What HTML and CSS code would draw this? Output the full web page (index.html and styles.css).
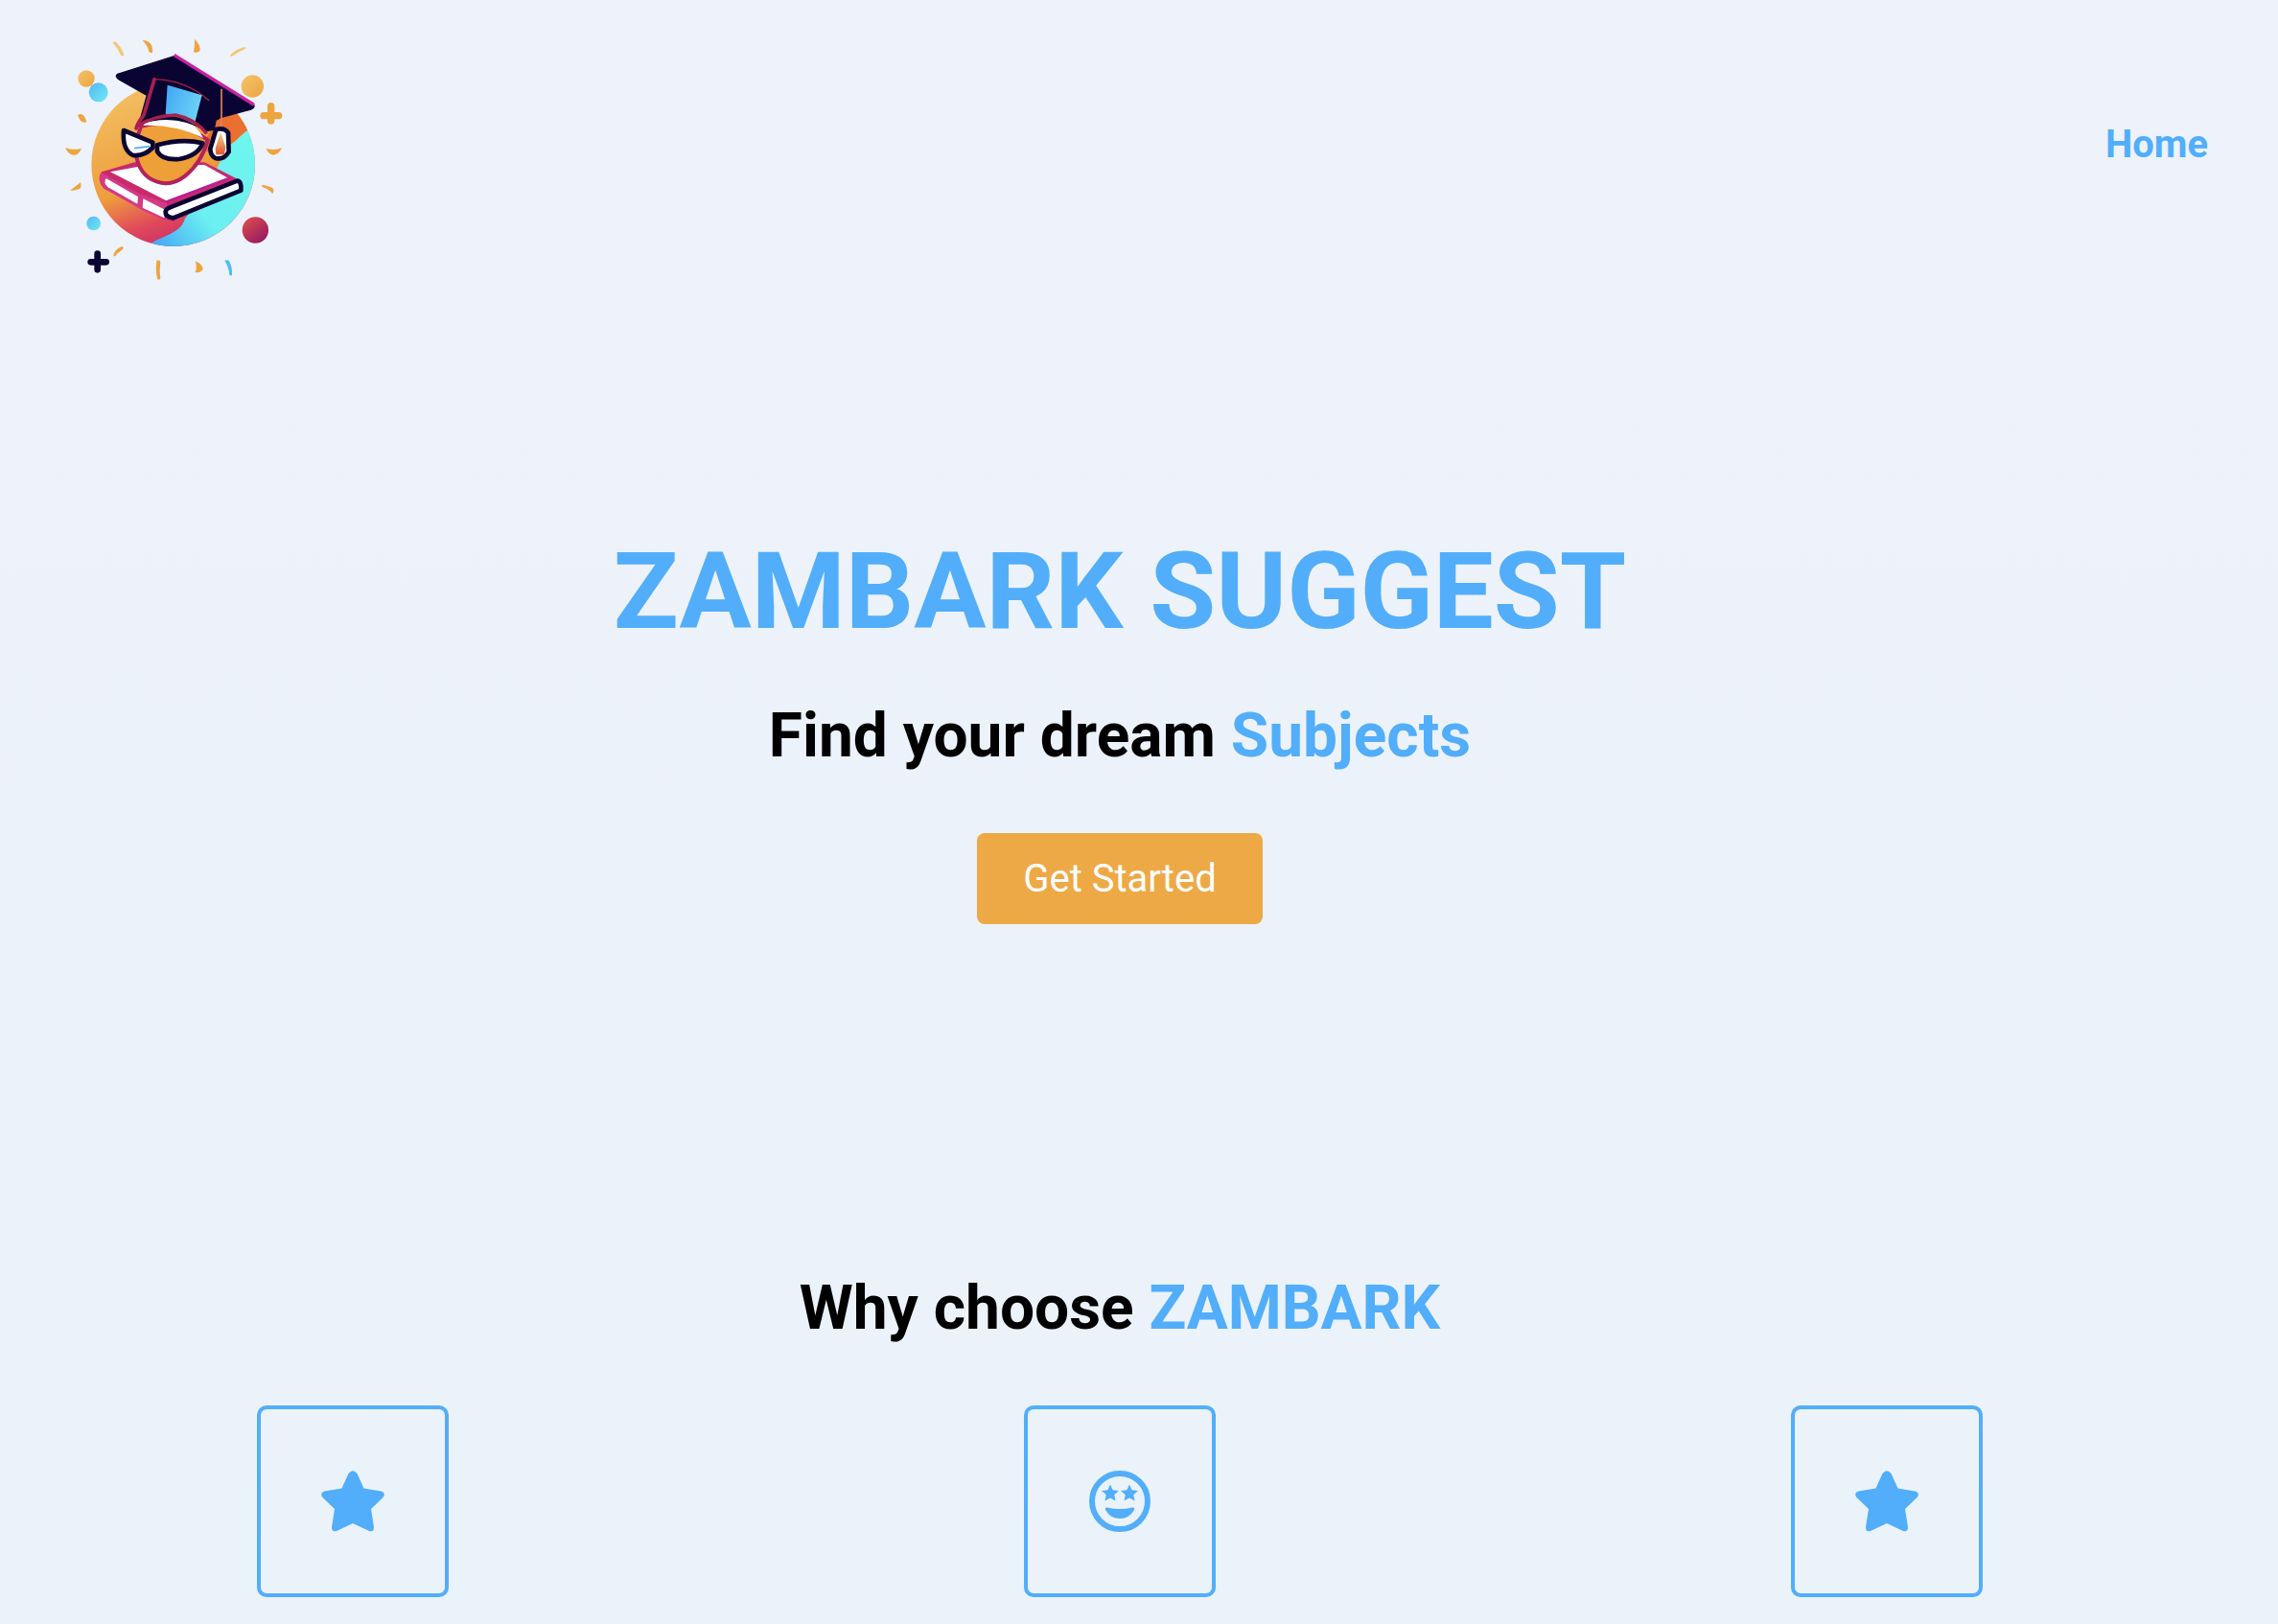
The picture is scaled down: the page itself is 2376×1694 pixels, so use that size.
FILE: index.html
```html
<!DOCTYPE html>
<html lang="en">
<head>
    <meta charset="UTF-8">
    <meta name="viewport" content="width=device-width, initial-scale=1.0">
    <title>Zambark Suggest</title>
    <link rel="stylesheet" href="styles.css">
</head>
<body>
    <header class="site-header">
        <a class="logo" href="#" aria-label="Zambark logo">
            <svg class="logo-img" viewBox="0 0 810 840" xmlns="http://www.w3.org/2000/svg">
                <defs>
                    <linearGradient id="discWarm" x1="0.2" y1="0" x2="0.55" y2="1">
                        <stop offset="0" stop-color="#f3c164"/>
                        <stop offset="0.6" stop-color="#ee9d3d"/>
                        <stop offset="0.82" stop-color="#e0495a"/>
                        <stop offset="1" stop-color="#c92a6c"/>
                    </linearGradient>
                    <linearGradient id="discCool" x1="1" y1="0.1" x2="0" y2="1">
                        <stop offset="0" stop-color="#6ff6ee"/>
                        <stop offset="0.6" stop-color="#6ceff0"/>
                        <stop offset="1" stop-color="#3f9ff8"/>
                    </linearGradient>
                    <linearGradient id="panel" x1="0" y1="0" x2="1" y2="0.4">
                        <stop offset="0" stop-color="#3fa5f5"/>
                        <stop offset="1" stop-color="#6cd2f5"/>
                    </linearGradient>
                    <linearGradient id="ball" x1="0.1" y1="0" x2="0.9" y2="1">
                        <stop offset="0" stop-color="#df4f4e"/>
                        <stop offset="1" stop-color="#8f1560"/>
                    </linearGradient>
                    <linearGradient id="sun" x1="0" y1="0" x2="1" y2="1">
                        <stop offset="0" stop-color="#f2c46a"/>
                        <stop offset="1" stop-color="#eea43f"/>
                    </linearGradient>
                    <linearGradient id="drop" x1="0" y1="0" x2="1" y2="1">
                        <stop offset="0" stop-color="#55b8f7"/>
                        <stop offset="1" stop-color="#6fe9f0"/>
                    </linearGradient>
                    <linearGradient id="tassel" x1="0" y1="0" x2="0" y2="1">
                        <stop offset="0" stop-color="#f5d9a0"/>
                        <stop offset="1" stop-color="#e0562c"/>
                    </linearGradient>
                    <clipPath id="discClip"><circle cx="392" cy="455" r="256"/></clipPath>
                </defs>

                <!-- disc -->
                <circle cx="392" cy="455" r="256" fill="url(#discWarm)"/>
                <g clip-path="url(#discClip)">
                    <path d="M560 250 L660 300 L628 345 C600 365 585 385 560 400 L470 420 Z" fill="#ea6f30"/>
                    <path d="M628 345 C600 365 590 385 565 395 L480 560 L428 625 C420 665 370 675 325 700 L330 730 L680 730 L680 340 Z" fill="url(#discCool)"/>
                </g>

                <!-- confetti -->
                <g fill="#eea43f">
                    <path d="M203 74 Q208 66 214 72 Q230 88 238 110 Q236 118 229 114 Q220 92 203 74 Z" fill="#f3c779"/>
                    <path d="M570 112 Q590 92 616 87 Q622 90 616 94 Q596 102 576 116 Q570 118 570 112 Z" fill="#f3c779"/>
                    <path d="M296 66 Q330 68 327 104 Q322 106 316 102 Q314 85 296 66 Z"/>
                    <path d="M459 62 Q480 84 475 100 Q462 108 456 102 Q460 85 459 62 Z"/>
                    <path d="M93 300 Q112 288 121 322 Q102 328 93 300 Z"/>
                    <path d="M55 402 Q80 412 105 404 Q95 428 78 425 Q62 422 55 402 Z"/>
                    <path d="M682 404 Q708 412 732 403 Q722 425 705 425 Q690 422 682 404 Z"/>
                    <path d="M69 536 Q85 525 102 511 Q106 525 100 530 Q85 538 69 536 Z"/>
                    <path d="M670 518 Q695 522 705 530 Q708 540 703 546 Q688 530 670 525 Z"/>
                    <path d="M205 740 Q208 720 232 711 Q240 715 232 722 Q218 730 212 740 Q208 743 205 740 Z"/>
                    <path d="M340 755 Q352 752 352 760 Q348 785 352 812 Q346 818 342 812 Q336 785 340 755 Z"/>
                    <path d="M461 757 Q488 768 484 785 Q472 796 461 792 Q468 775 461 757 Z"/>
                    <path d="M553 755 Q565 752 568 758 Q578 778 576 800 Q572 805 568 800 Q565 775 553 755 Z" fill="#4fc0ee"/>
                </g>

                <circle cx="120" cy="186" r="26" fill="url(#sun)"/>
                <circle cx="158" cy="229" r="30" fill="url(#drop)"/>
                <circle cx="640" cy="210" r="35" fill="url(#sun)"/>
                <circle cx="143" cy="639" r="22" fill="url(#drop)"/>
                <circle cx="649" cy="660" r="41" fill="url(#ball)"/>
                <path d="M698 272 V318 M675 302 H722" stroke="#eea43f" stroke-width="22" stroke-linecap="round" fill="none"/>
                <path d="M155 734 V784 M134 760 H182" stroke="#0a0432" stroke-width="20" stroke-linecap="round" fill="none"/>

                <!-- book -->
                <path d="M168 478 L270 448 L490 448 L596 502 L390 634 L290 585 L175 530 Q150 500 168 478 Z" fill="#c92a6c"/>
                <path d="M195 478 L280 462 L490 456 L565 498 L370 568 Z" fill="#fff"/>
                <path d="M370 572 L570 496" stroke="#b91f9a" stroke-width="7" fill="none"/>
                <path d="M168 480 L290 548 L372 576 L372 632 L300 600 L176 530 Q152 500 168 480 Z" fill="#d43a86"/>
                <path d="M182 498 L282 556 L280 578 L188 526 Q172 512 182 498 Z" fill="#fff"/>
                <path d="M298 562 L366 596 L364 622 L296 590 Z" fill="#fff"/>
                <path d="M380 590 L592 506 Q606 506 604 536 L392 622 Q366 618 368 602 Q370 594 380 590 Z" fill="#fff" stroke="#0a0432" stroke-width="14" stroke-linejoin="round"/>

                <!-- face -->
                <path d="M292 335 Q400 305 500 378 Q480 450 430 490 Q385 525 340 508 Q285 490 275 420 Q272 380 292 335 Z" fill="#ee9f38" stroke="#b3225c" stroke-width="12" stroke-linejoin="round"/>
                <path d="M295 326 Q370 300 440 322 Q470 340 486 372 Q405 330 300 332 Z" fill="#fff"/>

                <!-- cap -->
                <path d="M218 172 L395 116 L640 262 Q652 275 636 282 L540 308 L525 316 L520 345 L495 350 Q400 290 285 328 L310 238 L225 190 Q208 180 218 172 Z" fill="#0a0432" stroke="#0a0432" stroke-width="4" stroke-linejoin="round"/>
                <path d="M395 112 L645 268" stroke="#c722a5" stroke-width="10" fill="none"/>
                <path d="M335 188 Q430 190 505 255" stroke="#a8203f" stroke-width="4" fill="none"/>
                <path d="M333 188 L300 300 Q280 325 276 342" stroke="#a8204f" stroke-width="11" fill="none" stroke-linecap="round"/>
                <path d="M374 206 L482 238 L458 330 Q420 305 368 296 Z" fill="url(#panel)"/>
                <path d="M280 334 Q330 302 400 300 Q460 312 497 358" stroke="#a8204f" stroke-width="10" fill="none"/>

                <!-- tassel -->
                <path d="M543 218 V350" stroke="#e7805a" stroke-width="5" fill="none"/>
                <path d="M526 345 Q552 338 564 356 L566 415 Q550 442 524 435 Q508 427 508 405 Z" fill="#fff" stroke="#0a0432" stroke-width="14" stroke-linejoin="round"/>
                <path d="M540 352 L556 400 L552 424 L526 424 L524 405 Z" fill="url(#tassel)"/>

                <!-- glasses -->
                <path d="M237 348 L328 386 L328 402 Q300 430 266 426 Q232 410 237 348 Z" fill="#fff" stroke="#0a0432" stroke-width="14" stroke-linejoin="round"/>
                <path d="M342 394 Q420 372 484 388 Q470 428 410 438 Q358 442 342 414 Z" fill="#fff" stroke="#0a0432" stroke-width="14" stroke-linejoin="round"/>
                <path d="M270 404 L318 398" stroke="#4fb0ee" stroke-width="5" fill="none"/>
            </svg>
        </a>
        <nav class="nav">
            <a class="nav-link" href="#">Home</a>
        </nav>
    </header>

    <section class="hero">
        <h1 class="hero-title">ZAMBARK SUGGEST</h1>
        <p class="hero-sub">Find your dream <span class="accent">Subjects</span></p>
        <a class="btn" href="#">Get Started</a>
    </section>

    <section class="why">
        <h2 class="why-title">Why choose <span class="accent">ZAMBARK</span></h2>
        <div class="why-row">
            <div class="icon-box">
                <svg class="icon" viewBox="0 0 96 96"><path d="M43.5 19Q48 13.500 52.500 19L59.500 34.500L77.500 37.500Q82.500 39 80 43.500L67 56L70 75Q70 80.500 65 79L48 71L31 79Q26 80.500 26 75L29 56L16 43.500Q13.500 39 18.500 37.500L36.500 34.500Z"/></svg>
            </div>
            <div class="icon-box">
                <svg class="icon" viewBox="0 0 96 96">
                    <circle class="ring" cx="48" cy="48" r="29"/>
                    <path d="M38 30.500l2.700 5.700 6.200.800-4.600 4.300 1.200 6.100-5.500-3-5.500 3 1.200-6.100-4.600-4.300 6.200-.800z"/>
                    <path d="M58 30.500l2.700 5.700 6.200.800-4.600 4.300 1.200 6.100-5.500-3-5.500 3 1.200-6.100-4.600-4.300 6.200-.800z"/>
                    <path d="M35 54.500Q48 57.500 61 54.500Q64 54 63 57Q58 66 48 66Q38 66 33 57Q32 54 35 54.500Z"/>
                </svg>
            </div>
            <div class="icon-box">
                <svg class="icon" viewBox="0 0 96 96"><path d="M43.5 19Q48 13.500 52.500 19L59.500 34.500L77.500 37.500Q82.500 39 80 43.500L67 56L70 75Q70 80.500 65 79L48 71L31 79Q26 80.500 26 75L29 56L16 43.500Q13.500 39 18.500 37.500L36.500 34.500Z"/></svg>
            </div>
        </div>
    </section>
</body>
</html>
```

FILE: styles.css
```css
* {
    box-sizing: border-box;
}

body {
    margin: 0;
    padding-right: 40px;
    font-family: Roboto, Arial, sans-serif;
    background: linear-gradient(#eef2fb, #eaf2fa);
    color: #000;
}

a {
    text-decoration: none;
}

.site-header {
    display: flex;
    justify-content: space-between;
    align-items: flex-start;
    padding: 20px 33px 0 50px;
}

.logo {
    display: block;
    height: 280px;
}

.logo-img {
    display: block;
    width: 270px;
    height: 280px;
}

.nav {
    padding-top: 105px;
}

.nav-link {
    color: #52aefa;
    font-size: 40px;
    font-weight: 700;
    line-height: 52px;
}

.hero {
    display: flex;
    flex-direction: column;
    align-items: center;
    padding-top: 251px;
}

.hero-title {
    margin: 0;
    color: #52aefa;
    font-size: 112px;
    font-weight: 700;
    line-height: 132px;
}

.hero-sub {
    margin: 47px 0 0;
    font-size: 64px;
    font-weight: 700;
    line-height: 76px;
}

.accent {
    color: #52aefa;
}

.btn {
    display: block;
    margin-top: 63px;
    padding: 0 48px;
    height: 95px;
    line-height: 95px;
    background-color: #eda946;
    color: #fff;
    font-size: 40px;
    border-radius: 8px;
}

.why {
    padding-top: 363px;
}

.why-title {
    margin: 0;
    text-align: center;
    font-size: 64px;
    font-weight: 700;
    line-height: 76px;
}

.why-row {
    display: flex;
    justify-content: space-between;
    margin-top: 63px;
    padding: 0 268px 28px;
}

.icon-box {
    display: flex;
    align-items: center;
    justify-content: center;
    width: 200px;
    height: 200px;
    border: 4px solid #52aefa;
    border-radius: 10px;
}

.icon {
    display: block;
    width: 96px;
    height: 96px;
    fill: #52aefa;
}

.icon .ring {
    fill: none;
    stroke: #52aefa;
    stroke-width: 6;
}
```
